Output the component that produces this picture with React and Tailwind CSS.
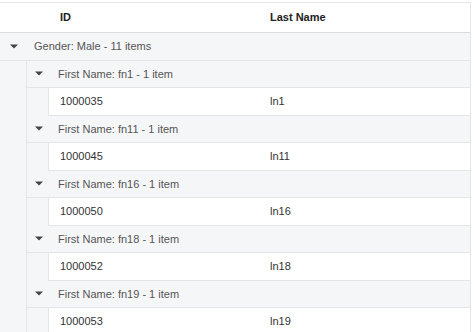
import React from "react";

const people = [
  { first: "fn1", id: "1000035", last: "ln1" },
  { first: "fn11", id: "1000045", last: "ln11" },
  { first: "fn16", id: "1000050", last: "ln16" },
  { first: "fn18", id: "1000052", last: "ln18" },
  { first: "fn19", id: "1000053", last: "ln19" },
];

function Caret() {
  return (
    <svg width="8" height="5" viewBox="0 0 8 5" className="shrink-0">
      <path d="M0 0.5 L8 0.5 L4 4.5 Z" fill="#444" />
    </svg>
  );
}

function GroupRow({ label }) {
  return (
    <div className="flex h-[27.5px] items-center border-b border-[#e4e5e7] bg-[#f5f6f8]">
      <div className="flex w-[28px] justify-center">
        <Caret />
      </div>
      <span className="ml-[6px] text-[11px] text-[#555]">{label}</span>
    </div>
  );
}

export default function App() {
  return (
    <div className="h-[332px] w-[474px] overflow-hidden bg-white pt-[2px] font-['Liberation_Sans',Arial,sans-serif]">
      <div className="w-[471px] border-r border-t border-[#e4e5e7]">
        <div className="flex h-[30px] items-center border-b border-[#dcdde0] text-[11px] font-bold text-[#222]">
          <div className="w-[60px]" />
          <div className="w-[210px]">ID</div>
          <div>Last Name</div>
        </div>

        <GroupRow label="Gender: Male - 11 items" />

        <div className="flex bg-[#f5f6f8]">
          <div className="w-[27px] shrink-0 border-r border-[#e4e5e7]" />
          <div className="flex-1">
            {people.map((p) => (
              <div key={p.id}>
                <div className="flex h-[27.5px] items-center border-b border-[#e4e5e7]">
                  <div className="flex w-[23px] justify-center">
                    <Caret />
                  </div>
                  <span className="ml-[8px] text-[11px] text-[#555]">
                    First Name: {p.first} - 1 item
                  </span>
                </div>
                <div className="flex">
                  <div className="w-[22px] shrink-0 border-r border-[#e4e5e7]" />
                  <div className="flex h-[27.5px] flex-1 items-center border-b border-[#e4e5e7] bg-white text-[11px] text-[#333]">
                    <div className="w-[221px] pl-[11px]">{p.id}</div>
                    <div>{p.last}</div>
                  </div>
                </div>
              </div>
            ))}
          </div>
        </div>
      </div>
    </div>
  );
}
